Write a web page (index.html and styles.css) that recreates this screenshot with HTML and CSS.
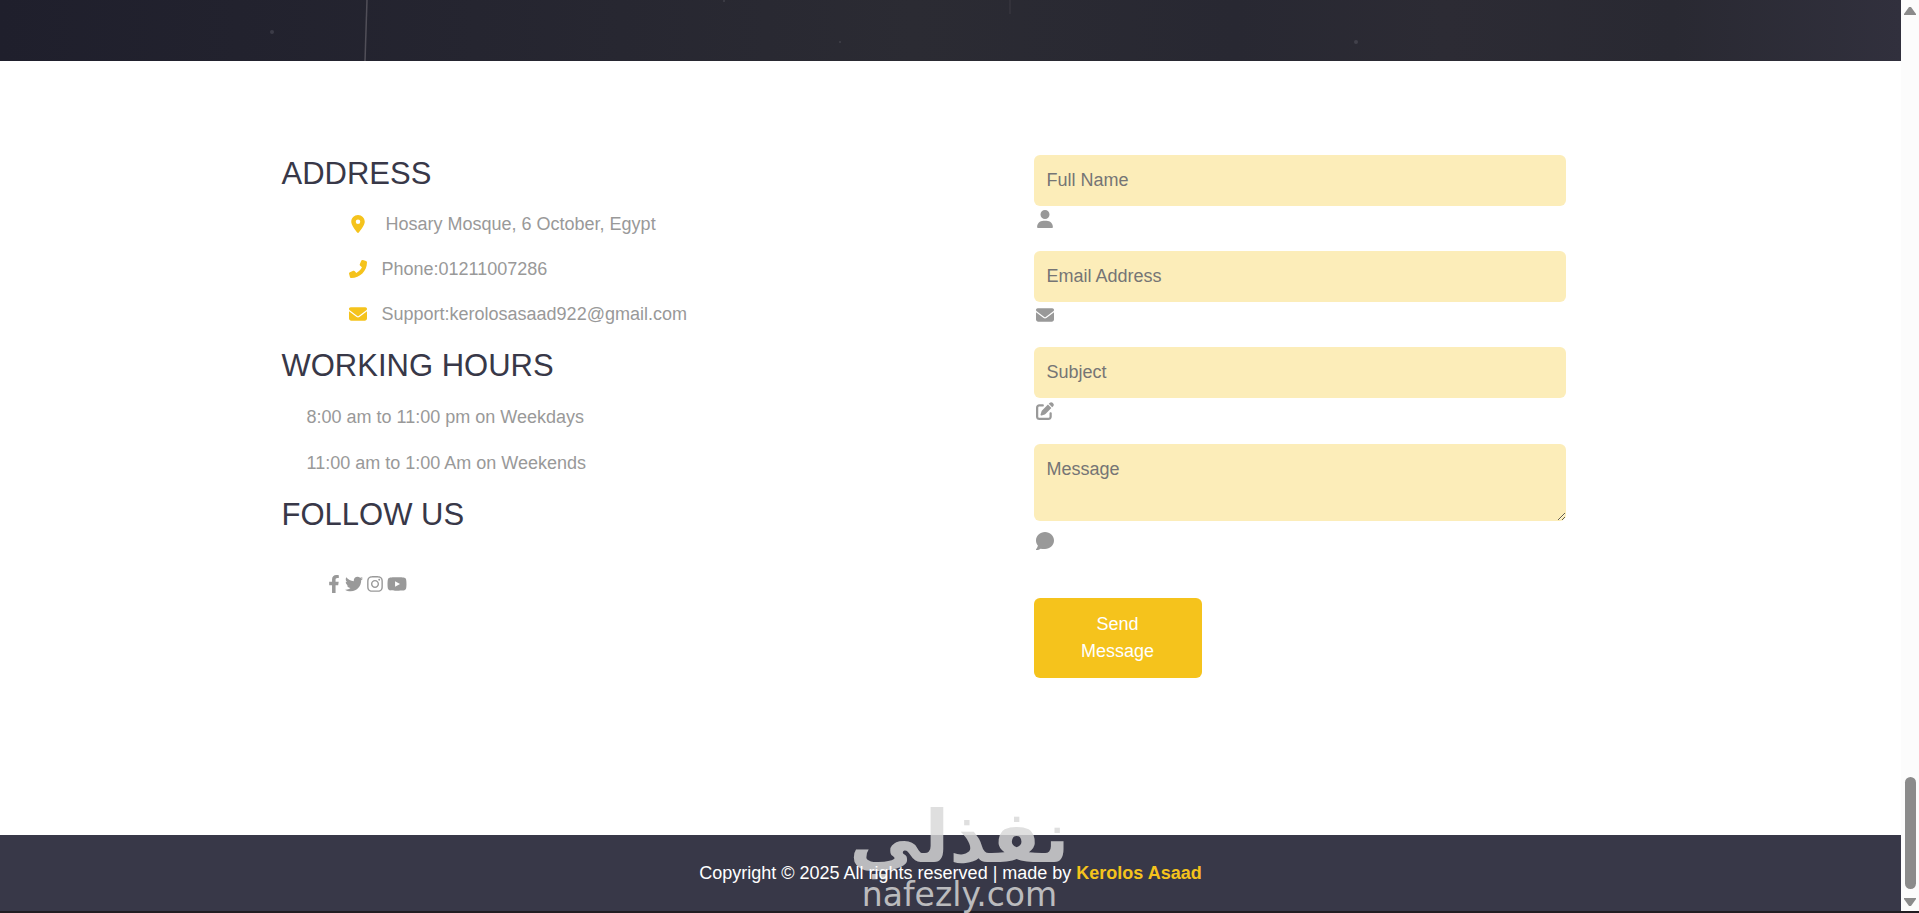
FILE: index.html
```html
<!DOCTYPE html>
<html lang="en">
<head>
<meta charset="utf-8">
<title>Contact</title>
<link rel="stylesheet" href="styles.css">
</head>
<body>
<svg class="sprite" aria-hidden="true">
  <symbol id="envelope" viewBox="0 0 512 512"><path d="M48 64C21.500 64 0 85.500 0 112c0 15.100 7.100 29.300 19.200 38.400L236.800 313.600c11.400 8.500 27 8.500 38.400 0L492.800 150.400c12.100-9.100 19.200-23.300 19.200-38.400c0-26.500-21.500-48-48-48H48zM0 176V384c0 35.300 28.700 64 64 64H448c35.300 0 64-28.700 64-64V176L294.400 339.200c-22.800 17.100-54 17.100-76.800 0L0 176z"/></symbol>
</svg>
<div class="window">
  <div class="page">
    <div class="hero">
      <svg class="hero-texture" viewBox="0 0 1901 61" preserveAspectRatio="none" aria-hidden="true">
        <path d="M367 0 365 61" stroke="#77727a" stroke-opacity=".55" stroke-width="1.500" fill="none"/>
        <path d="M1010 0v14" stroke="#77727a" stroke-opacity=".25" fill="none"/>
        <g fill="#777680" fill-opacity=".3"><circle cx="272" cy="32" r="2"/><circle cx="724" cy="1" r="1"/><circle cx="840" cy="42" r="1"/><circle cx="1356" cy="42" r="2"/></g>
      </svg>
    </div>
    <main class="contact">
      <section class="info">
        <h2>ADDRESS</h2>
        <ul class="details">
          <li><svg class="icon" viewBox="-64 0 512 512"><path d="M215.700 499.200C267 435 384 279.400 384 192C384 86 298 0 192 0S0 86 0 192c0 87.400 117 243 168.300 307.200c12.300 15.300 35.100 15.300 47.400 0zM192 128a64 64 0 1 1 0 128 64 64 0 1 1 0-128z"/></svg><span class="place">Hosary Mosque, 6 October, Egypt</span></li>
          <li><svg class="icon" viewBox="0 0 512 512"><path d="M347.100 24.600c7.700-18.600 28-28.500 47.400-23.200l88 24C499.900 30.200 512 46 512 64c0 247.400-200.600 448-448 448c-18 0-33.800-12.100-38.600-29.500l-24-88c-5.300-19.400 4.600-39.700 23.200-47.400l96-40c16.300-6.800 35.200-2.100 46.300 11.600L207.300 368c70.400-33.300 127.400-90.300 160.700-160.700L318.700 167c-13.700-11.200-18.400-30-11.600-46.300l40-96z"/></svg><span>Phone:01211007286</span></li>
          <li><svg class="icon"><use href="#envelope"/></svg><span>Support:kerolosasaad922@gmail.com</span></li>
        </ul>
        <h2>WORKING HOURS</h2>
        <ul class="hours">
          <li>8:00 am to 11:00 pm on Weekdays</li>
          <li>11:00 am to 1:00 Am on Weekends</li>
        </ul>
        <h2>FOLLOW US</h2>
        <nav class="social">
          <a href="#" aria-label="Facebook"><svg class="icon narrow" viewBox="0 0 320 512"><path d="M279.140 288l14.220-92.660h-88.910v-60.130c0-25.350 12.420-50.060 52.240-50.060h40.420V6.260S260.430 0 225.360 0c-73.220 0-121.080 44.380-121.080 124.720v70.620H22.890V288h81.390v224h100.170V288z"/></svg></a>
          <a href="#" aria-label="Twitter"><svg class="icon" viewBox="0 0 512 512"><path d="M459.370 151.716c.325 4.548.325 9.097.325 13.645 0 138.720-105.583 298.558-298.558 298.558-59.452 0-114.680-17.219-161.137-47.106 8.447.974 16.568 1.299 25.340 1.299 49.055 0 94.213-16.568 130.274-44.832-46.132-.975-84.792-31.188-98.112-72.772 6.498.974 12.995 1.624 19.818 1.624 9.421 0 18.843-1.300 27.614-3.573-48.081-9.747-84.143-51.980-84.143-102.985v-1.299c13.969 7.797 30.214 12.670 47.431 13.319-28.264-18.843-46.781-51.005-46.781-87.391 0-19.492 5.197-37.360 14.294-52.954 51.655 63.675 129.300 105.258 216.365 109.807-1.624-7.797-2.599-15.918-2.599-24.040 0-57.828 46.782-104.934 104.934-104.934 30.213 0 57.502 12.670 76.670 33.137 23.715-4.548 46.456-13.320 66.599-25.340-7.798 24.366-24.366 44.833-46.132 57.827 21.117-2.273 41.584-8.122 60.426-16.243-14.292 20.791-32.161 39.308-52.628 54.253z"/></svg></a>
          <a href="#" aria-label="Instagram"><svg class="icon medium" viewBox="0 0 448 512"><path d="M224.100 141c-63.600 0-114.900 51.300-114.900 114.900s51.300 114.900 114.900 114.900S339 319.500 339 255.900 287.700 141 224.100 141zm0 189.600c-41.100 0-74.700-33.500-74.700-74.700s33.500-74.700 74.700-74.700 74.700 33.500 74.700 74.700-33.600 74.700-74.700 74.700zm146.400-194.300c0 14.900-12 26.800-26.800 26.800-14.900 0-26.800-12-26.800-26.800s12-26.800 26.800-26.800 26.800 12 26.800 26.800zm76.100 27.200c-1.700-35.900-9.900-67.700-36.200-93.900-26.200-26.200-58-34.400-93.900-36.200-37-2.100-147.900-2.100-184.900 0-35.800 1.700-67.600 9.900-93.900 36.100s-34.400 58-36.200 93.900c-2.100 37-2.100 147.900 0 184.900 1.700 35.900 9.900 67.700 36.200 93.900s58 34.400 93.900 36.200c37 2.100 147.900 2.100 184.900 0 35.900-1.700 67.700-9.900 93.900-36.200 26.200-26.200 34.400-58 36.200-93.900 2.100-37 2.100-147.800 0-184.800zM398.800 388c-7.800 19.600-22.900 34.700-42.600 42.600-29.500 11.700-99.500 9-132.100 9s-102.700 2.600-132.100-9c-19.600-7.800-34.700-22.900-42.600-42.600-11.700-29.500-9-99.500-9-132.100s-2.600-102.700 9-132.100c7.800-19.600 22.900-34.700 42.600-42.600 29.500-11.700 99.500-9 132.100-9s102.700-2.600 132.100 9c19.600 7.800 34.700 22.900 42.600 42.600 11.700 29.500 9 99.500 9 132.100s2.700 102.700-9 132.100z"/></svg></a>
          <a href="#" aria-label="YouTube"><svg class="icon wide" viewBox="0 0 576 512"><path d="M549.655 124.083c-6.281-23.650-24.787-42.276-48.284-48.597C458.781 64 288 64 288 64S117.220 64 74.629 75.486c-23.497 6.322-42.003 24.947-48.284 48.597-11.412 42.867-11.412 132.305-11.412 132.305s0 89.438 11.412 132.305c6.281 23.650 24.787 41.500 48.284 47.821C117.220 448 288 448 288 448s170.780 0 213.371-11.486c23.497-6.321 42.003-24.171 48.284-47.821 11.412-42.867 11.412-132.305 11.412-132.305s0-89.438-11.412-132.305zm-317.510 213.508V175.185l142.739 81.205-142.739 81.201z"/></svg></a>
        </nav>
      </section>
      <form class="form">
        <div class="field">
          <input type="text" id="name" placeholder="Full Name">
          <label for="name" aria-label="Full Name"><svg class="icon" viewBox="-32 0 512 512"><path d="M224 256a128 128 0 1 0 0-256 128 128 0 1 0 0 256zm-45.700 48C79.800 304 0 383.800 0 482.300C0 498.700 13.300 512 29.700 512H418.300c16.400 0 29.700-13.300 29.700-29.700C448 383.800 368.200 304 269.700 304H178.300z"/></svg></label>
        </div>
        <div class="field">
          <input type="email" id="email" placeholder="Email Address">
          <label for="email" aria-label="Email Address"><svg class="icon"><use href="#envelope"/></svg></label>
        </div>
        <div class="field">
          <input type="text" id="subject" placeholder="Subject">
          <label for="subject" aria-label="Subject"><svg class="icon" viewBox="0 0 512 512"><path d="M471.600 21.700c-21.900-21.900-57.300-21.900-79.200 0L362.300 51.700l97.900 97.900 30.100-30.100c21.900-21.900 21.900-57.300 0-79.200L471.600 21.700zm-299.200 220c-6.100 6.100-10.800 13.600-13.500 21.900l-29.600 88.800c-2.900 8.600-.6 18.100 5.800 24.600s15.900 8.700 24.600 5.800l88.800-29.600c8.200-2.700 15.700-7.400 21.900-13.500L437.700 172.300 339.700 74.300 172.400 241.700zM96 64C43 64 0 107 0 160V416c0 53 43 96 96 96H352c53 0 96-43 96-96V320c0-17.700-14.300-32-32-32s-32 14.300-32 32v96c0 17.700-14.300 32-32 32H96c-17.700 0-32-14.300-32-32V160c0-17.700 14.300-32 32-32h96c17.700 0 32-14.300 32-32s-14.300-32-32-32H96z"/></svg></label>
        </div>
        <div class="field message">
          <textarea id="message" placeholder="Message"></textarea>
          <label for="message" aria-label="Message"><svg class="icon" viewBox="0 0 512 512"><path d="M256 480c141.400 0 256-107.500 256-240S397.400 0 256 0S0 107.500 0 240c0 55 19.800 105.500 52.900 145.500C49 431 25 465 2 487c-6 10-2 25 13 25c48 0 86-18 112-37c38 3 80 5 129 5z"/></svg></label>
        </div>
        <button type="submit">Send Message</button>
      </form>
    </main>
    <footer class="footer">
      <p>Copyright © 2025 All rights reserved | made by <a href="#">Kerolos Asaad</a></p>
    </footer>
  </div>
  <div class="scrollbar" aria-hidden="true">
    <svg class="arrow" viewBox="0 0 12 10"><path d="M5 1h2l5 7v1H0V8z"/></svg>
    <div class="thumb"></div>
    <svg class="arrow" viewBox="0 0 12 10"><path d="M0 1H12V2L7 9H5L0 2z"/></svg>
  </div>
</div>
<div class="edge"></div>
<div class="watermark" aria-hidden="true">
  <span class="mark-ar" lang="ar" dir="rtl">نفذلي</span>
  <span class="mark-en">nafezly.com</span>
</div>
</body>
</html>
```

FILE: styles.css
```css
* { box-sizing: border-box; }

body {
  margin: 0;
  display: flex;
  flex-direction: column;
  min-height: 100vh;
  background: #fff;
  color: #999;
  font: 18px/27px "Liberation Sans", Arial, sans-serif;
}

h2, p, ul { margin: 0; padding: 0; }
ul { list-style: none; }
a { color: inherit; text-decoration: none; }

.sprite { position: absolute; width: 0; height: 0; }

.icon {
  display: block;
  width: 18px;
  height: 18px;
  fill: currentColor;
}
.icon.narrow { width: 14px; }
.icon.medium { width: 16px; }
.icon.wide { width: 20px; }

.window { flex: 1; display: flex; }
.page { flex: 1; display: flex; flex-direction: column; }

.hero {
  height: 61px;
  background: linear-gradient(90deg, #1f1f2c, #252530 25%, #2b2b33 48%, #282832 65%, #2c2b34 76%, #292932 88%, #31303d);
}
.hero-texture { display: block; width: 100%; height: 100%; }

.contact {
  flex: 1;
  display: grid;
  grid-template-columns: 752px minmax(0, 532px);
  justify-content: center;
  padding: 93px 0 80px;
  margin-right: 54px;
}

h2 {
  color: #383848;
  font-size: 31px;
  font-weight: 400;
  line-height: 40px;
}

.details { padding: 8px 0 9px 67px; }
.details li {
  display: flex;
  align-items: center;
  gap: 15px;
  height: 45px;
}
.details .icon { color: #f5c31c; margin-bottom: 2px; }
.place { padding-left: 4px; }

.hours { padding: 8px 0 9px 25px; }
.hours li { line-height: 46px; }

.social {
  display: flex;
  align-items: center;
  gap: 4px;
  padding: 40px 0 0 45px;
}

.field { height: 96px; padding-top: 1px; }
.field input,
.field textarea {
  display: block;
  width: 100%;
  height: 51px;
  padding: 12px 13px;
  border: 0;
  border-radius: 6px;
  background: #fcedb9;
  color: #383848;
  font: inherit;
}
.field ::placeholder { color: #757575; }
.field label {
  display: block;
  width: 22px;
  padding: 4px 2px 0;
}
.field.message { height: 156px; padding-top: 2px; }
.field textarea { height: 77px; resize: both; }
.field.message label { padding-top: 11px; }

button {
  width: 168px;
  padding: 13px 40px;
  border: 0;
  border-radius: 6px;
  background: #f5c31c;
  color: #fff;
  font: inherit;
}

.footer {
  padding: 25px 0 24px;
  background: #383848;
  color: #fff;
  text-align: center;
}
.footer p { position: relative; z-index: 1; }
.footer a { color: #f5c31c; font-weight: 700; }

.scrollbar {
  width: 18px;
  display: flex;
  flex-direction: column;
  align-items: center;
  padding: 6px 0 4px;
  background: #fcfcfc;
}
.arrow { width: 12px; height: 10px; fill: #8b8b8b; }
.thumb {
  width: 11px;
  height: 112px;
  margin: auto 0 8px;
  border-radius: 6px;
  background: #8b8b8b;
}

.edge { height: 2px; background: #211d22; }

.watermark {
  position: absolute;
  bottom: 0;
  left: 50%;
  width: 240px;
  margin-left: -120px;
  display: flex;
  flex-direction: column;
  align-items: center;
  color: #d8d8d8;
  opacity: .82;
  pointer-events: none;
}
.mark-ar { font: 700 72px/80px "DejaVu Sans", sans-serif; }
.mark-en { font: 400 33px/36px "DejaVu Sans", sans-serif; }
```
